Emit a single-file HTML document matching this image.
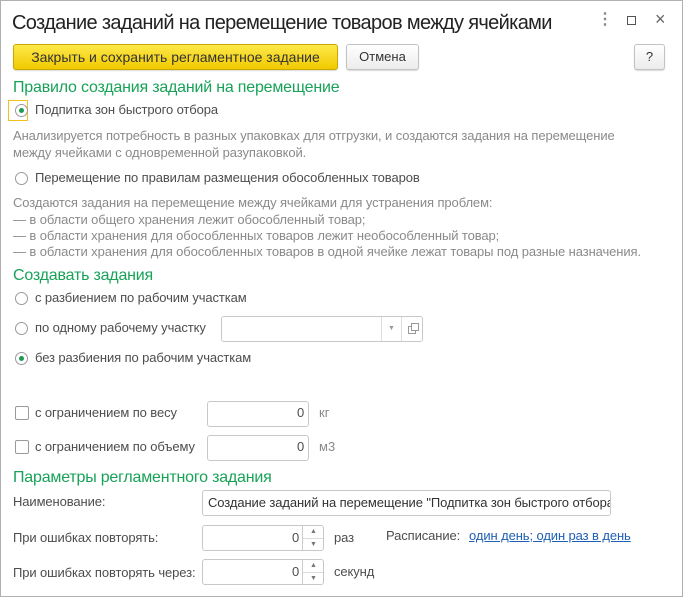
<!DOCTYPE html>
<html><head><meta charset="utf-8"><style>
body{margin:0;width:683px;height:597px;background:#fff;position:relative;overflow:hidden;font-family:"Liberation Sans",Arial,sans-serif;font-size:13px;color:#4d4d4d;}
.a{position:absolute;white-space:nowrap;line-height:16px;}
.t{letter-spacing:-0.1px}
.g{color:#8a8a8a}
.h{color:#17a258;font-size:16px;letter-spacing:-0.2px}
.r{position:absolute;width:13px;height:13px;border:1px solid #9a9a9a;border-radius:50%;background:#fff;box-sizing:border-box}
.r.on::after{content:"";position:absolute;left:3px;top:3px;width:5px;height:5px;border-radius:50%;background:#1c9a4f}
.c{position:absolute;width:14px;height:14px;border:1px solid #9a9a9a;border-radius:2px;box-sizing:border-box;background:#fff}
.i{position:absolute;border:1px solid #c8c8c8;border-radius:3px;box-sizing:border-box;background:#fff}
.btn{position:absolute;border:1px solid #c2c2c2;border-radius:3px;box-sizing:border-box;background:linear-gradient(#fff,#ececec);text-align:center;line-height:24px;box-shadow:0 1px 1px rgba(0,0,0,.15)}
</style></head><body>
<div style="position:absolute;left:0;top:0;width:683px;height:597px;border:1px solid #b0b0b0;box-sizing:border-box"></div>
<div class="a" style="left:12px;top:11px;font-size:20px;line-height:24px;color:#222;letter-spacing:-0.65px">Создание заданий на перемещение товаров между ячейками</div>
<div class="a" style="left:597px;top:12px;color:#888;font-size:16px;font-weight:bold">⋮</div>
<div style="position:absolute;left:627px;top:16px;width:9px;height:9px;border:1px solid #555;box-sizing:border-box"></div>
<div class="a" style="left:655px;top:11px;color:#666;font-size:18px">×</div>

<div class="btn" style="left:13px;top:44px;width:325px;height:26px;background:linear-gradient(#fde94a,#f1c900);border-color:#c9a800;color:#333;font-size:14px;letter-spacing:0px">Закрыть и сохранить регламентное задание</div>
<div class="btn" style="left:346px;top:44px;width:73px;height:26px;color:#333">Отмена</div>
<div class="btn" style="left:634px;top:44px;width:31px;height:26px;color:#333">?</div>

<div class="a h" style="left:13px;top:80px">Правило создания заданий на перемещение</div>
<div style="position:absolute;left:8px;top:100px;width:20px;height:21px;border:1px solid #f0c020;box-sizing:border-box"></div>
<div class="r on" style="left:15px;top:104px"></div>
<div class="a t" style="left:35px;top:102px">Подпитка зон быстрого отбора</div>
<div class="a t g" style="left:13px;top:128px">Анализируется потребность в разных упаковках для отгрузки, и создаются задания на перемещение</div>
<div class="a t g" style="left:13px;top:145px">между ячейками с одновременной разупаковкой.</div>
<div class="r" style="left:15px;top:172px"></div>
<div class="a t" style="left:35px;top:170px">Перемещение по правилам размещения обособленных товаров</div>
<div class="a t g" style="left:13px;top:195px">Создаются задания на перемещение между ячейками для устранения проблем:</div>
<div class="a t g" style="left:13px;top:212px">— в области общего хранения лежит обособленный товар;</div>
<div class="a t g" style="left:13px;top:228px">— в области хранения для обособленных товаров лежит необособленный товар;</div>
<div class="a t g" style="left:13px;top:244px">— в области хранения для обособленных товаров в одной ячейке лежат товары под разные назначения.</div>

<div class="a h" style="left:13px;top:268px">Создавать задания</div>
<div class="r" style="left:15px;top:292px"></div>
<div class="a t" style="left:35px;top:290px">с разбиением по рабочим участкам</div>
<div class="r" style="left:15px;top:322px"></div>
<div class="a t" style="left:35px;top:320px">по одному рабочему участку</div>
<div class="i" style="left:221px;top:316px;width:202px;height:26px"></div>
<div style="position:absolute;left:381px;top:317px;width:1px;height:24px;background:#ddd"></div>
<div style="position:absolute;left:401px;top:317px;width:1px;height:24px;background:#ddd"></div>
<div class="a" style="left:388px;top:321px;font-size:7px;color:#999">▼</div>
<div style="position:absolute;left:408px;top:326px;width:6px;height:6px;border:1px solid #999"></div>
<div style="position:absolute;left:411px;top:323px;width:6px;height:6px;border:1px solid #999;background:#fff"></div>
<div class="r on" style="left:15px;top:352px"></div>
<div class="a t" style="left:35px;top:350px">без разбиения по рабочим участкам</div>

<div class="c" style="left:15px;top:406px"></div>
<div class="a t" style="left:35px;top:405px">с ограничением по весу</div>
<div class="i" style="left:207px;top:401px;width:102px;height:26px"></div>
<div class="a" style="left:297px;top:405px">0</div>
<div class="a g" style="left:319px;top:405px">кг</div>
<div class="c" style="left:15px;top:440px"></div>
<div class="a t" style="left:35px;top:439px">с ограничением по объему</div>
<div class="i" style="left:207px;top:435px;width:102px;height:26px"></div>
<div class="a" style="left:297px;top:439px">0</div>
<div class="a g" style="left:319px;top:439px">м3</div>

<div class="a h" style="left:13px;top:470px">Параметры регламентного задания</div>
<div class="a t" style="left:13px;top:494px">Наименование:</div>
<div class="i" style="left:202px;top:490px;width:409px;height:26px;overflow:hidden"><div class="a t" style="left:5px;top:4px;color:#333">Создание заданий на перемещение "Подпитка зон быстрого отбора"</div></div>
<div class="a t" style="left:13px;top:530px">При ошибках повторять:</div>
<div class="i" style="left:202px;top:525px;width:122px;height:26px"></div>
<div style="position:absolute;left:302px;top:526px;width:1px;height:24px;background:#ccc"></div>
<div style="position:absolute;left:303px;top:538px;width:20px;height:1px;background:#ddd"></div>
<div class="a" style="left:292px;top:530px">0</div>
<div class="a" style="left:310px;top:524px;font-size:7px;color:#777">▲</div>
<div class="a" style="left:310px;top:537px;font-size:7px;color:#777">▼</div>
<div class="a t" style="left:334px;top:530px">раз</div>
<div class="a t" style="left:386px;top:528px">Расписание:</div>
<div class="a t" style="left:469px;top:528px;color:#1f5fb5;text-decoration:underline">один день; один раз в день</div>
<div class="a t" style="left:13px;top:565px">При ошибках повторять через:</div>
<div class="i" style="left:202px;top:559px;width:122px;height:26px"></div>
<div style="position:absolute;left:302px;top:560px;width:1px;height:24px;background:#ccc"></div>
<div style="position:absolute;left:303px;top:572px;width:20px;height:1px;background:#ddd"></div>
<div class="a" style="left:292px;top:564px">0</div>
<div class="a" style="left:310px;top:558px;font-size:7px;color:#777">▲</div>
<div class="a" style="left:310px;top:571px;font-size:7px;color:#777">▼</div>
<div class="a t" style="left:334px;top:564px">секунд</div>
</body></html>
